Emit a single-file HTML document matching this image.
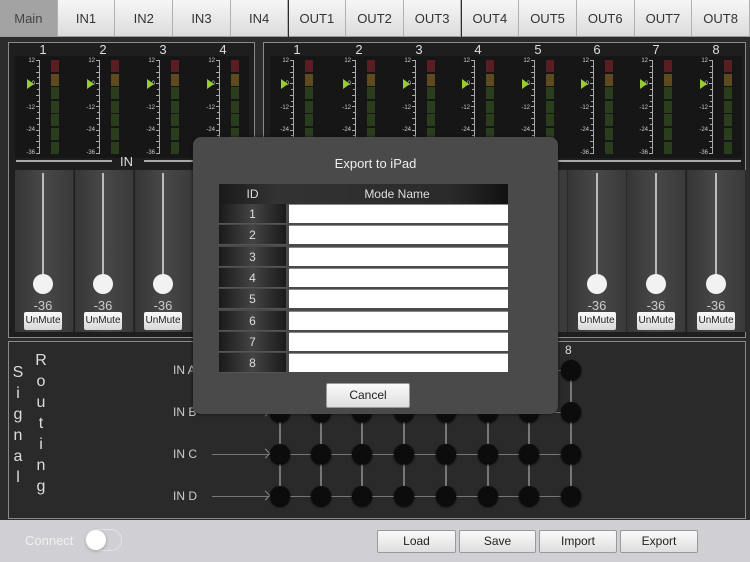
<!DOCTYPE html>
<html><head><meta charset="utf-8">
<style>
*{margin:0;padding:0;box-sizing:border-box}
body{width:750px;height:562px;overflow:hidden;background:#2c2c2c;font-family:"Liberation Sans",sans-serif;position:relative}
.abs{position:absolute}
.tab{position:absolute;top:0;height:37px;background:linear-gradient(#f6f6f6,#dcdcdc);border-right:1px solid #b0b0b0;border-bottom:1px solid #999;color:#333;font-size:13px;text-align:center;line-height:37px}
.tab.sel{background:#a3a3a3;color:#444}
.panel{position:absolute;border:2px solid #8a8a8a;background:#1e1e1e}
.num{position:absolute;color:#ddd;font-size:13px;width:20px;text-align:center}
.btn{position:absolute;background:linear-gradient(#fafafa,#dedede);border:1px solid #999;border-radius:2px;font-size:12px;color:#222;text-align:center}
.fcol{position:absolute;background:linear-gradient(90deg,#363636,#484848 50%,#3a3a3a);border-right:1px solid #2a2a2a}
.vline{position:absolute;width:2px;background:#bbb}
.knob{position:absolute;width:20px;height:20px;border-radius:50%;background:#f2f2f2}
.db{position:absolute;color:#ccc;font-size:13px;width:40px;text-align:center}
.um{position:absolute;width:38px;height:18px;background:linear-gradient(#fafafa,#d8d8d8);font-size:10px;line-height:18px;text-align:center;color:#222;border-radius:2px}
.dot{position:absolute;width:20px;height:20px;border-radius:50%;background:#0c0c0c;box-shadow:0 1px 2px #000}
.lbl{position:absolute;color:#ccc;font-size:12px}
.row{position:absolute;left:219px;width:289px;height:21px}
.rid{position:absolute;left:0;width:67px;height:20px;background:linear-gradient(90deg,#1a1a1a,#444 50%,#1a1a1a);color:#ddd;font-size:12px;text-align:center;line-height:20px;border-bottom:1px solid #555}
.rin{position:absolute;left:70px;width:219px;height:19px;background:#fff;border-top:1px solid #888}
</style></head><body>
<div id="tabs"></div>

<div class="panel" style="left:8px;top:42px;width:247px;height:296px;border-width:1px"></div>
<div class="panel" style="left:263px;top:42px;width:483px;height:296px;border-width:1px"></div>
<div id="meters"></div>
<div class="abs" style="left:16px;top:160px;width:96px;height:2px;background:#aaa"></div>
<div class="abs" style="left:120px;top:154px;color:#ddd;font-size:13px">IN</div>
<div class="abs" style="left:144px;top:160px;width:50px;height:2px;background:#aaa"></div>
<div class="abs" style="left:271px;top:160px;width:470px;height:2px;background:#aaa"></div>
<div id="faders"></div>

<div class="panel" style="left:8px;top:341px;width:738px;height:178px;background:#2a2a2a;border-width:1px"></div>
<div class="abs" style="left:11px;top:362px;color:#ddd;font-size:16px;line-height:21px;width:14px;text-align:center">S<br>i<br>g<br>n<br>a<br>l</div>
<div class="abs" style="left:34px;top:350px;color:#ddd;font-size:16px;line-height:21px;width:14px;text-align:center">R<br>o<br>u<br>t<br>i<br>n<br>g</div>
<div id="route"></div>
<div class="abs" style="left:565px;top:343px;color:#ddd;font-size:12px">8</div>

<div class="abs" style="left:0;top:520px;width:750px;height:42px;background:#d0d0d4"></div>
<div class="abs" style="left:25px;top:533px;color:#f0f0f2;font-size:13px">Connect</div>
<div class="abs" style="left:85px;top:529px;width:37px;height:22px;border-radius:11px;border:1px solid #e4e4e6;background:#d0d0d4"></div>
<div class="abs" style="left:86px;top:530px;width:20px;height:20px;border-radius:50%;background:#fff;box-shadow:0 1px 3px rgba(0,0,0,.3)"></div>
<div class="btn" style="left:377px;top:530px;width:79px;height:23px;line-height:21px">Load</div>
<div class="btn" style="left:459px;top:530px;width:77px;height:23px;line-height:21px">Save</div>
<div class="btn" style="left:539px;top:530px;width:78px;height:23px;line-height:21px">Import</div>
<div class="btn" style="left:620px;top:530px;width:78px;height:23px;line-height:21px">Export</div>

<div class="abs" style="left:193px;top:137px;width:365px;height:277px;background:#4a4a4a;border-radius:8px;box-shadow:0 0 3px #111"></div>
<div class="abs" style="left:193px;top:156px;width:365px;text-align:center;color:#eee;font-size:13px">Export to iPad</div>
<div class="abs" style="left:219px;top:184px;width:289px;height:20px;background:linear-gradient(90deg,#1a1a1a,#333 20%,#2a2a2a 80%,#111)"></div>
<div class="abs" style="left:219px;top:187px;width:67px;text-align:center;color:#ddd;font-size:12px">ID</div>
<div class="abs" style="left:286px;top:187px;width:222px;text-align:center;color:#ddd;font-size:12px">Mode Name</div>
<div id="rows"></div>
<div class="btn" style="left:326px;top:383px;width:84px;height:25px;line-height:23px;font-size:12px">Cancel</div>

<script>
var h='';
var names=['Main','IN1','IN2','IN3','IN4','OUT1','OUT2','OUT3','OUT4','OUT5','OUT6','OUT7','OUT8'];
var w=750/13;
names.forEach(function(n,i){h+='<div class="tab'+(i==0?' sel':'')+'" style="left:'+(i*w).toFixed(1)+'px;width:'+(w).toFixed(1)+'px">'+n+'</div>';});
document.getElementById('tabs').innerHTML=h;
var ins=[43,103,163,223],outs=[297,359,419,478,538,597,656,716];
h='';
h+='<div class="abs" style="left:15px;top:56px;width:234px;height:102px;background:#161616"></div>';
h+='<div class="abs" style="left:270px;top:56px;width:472px;height:102px;background:#161616"></div>';
function meter(cx,n){
 var s='<div class="num" style="left:'+(cx-10)+'px;top:42px">'+n+'</div>';
 s+='<div class="abs" style="left:'+(cx-4)+'px;top:60px;width:1px;height:93px;background:#aaa"></div>';
 for(var k=0;k<=16;k++){var y=60+k*5.8;s+='<div class="abs" style="left:'+(cx-7+(k%2?1:0))+'px;top:'+y.toFixed(1)+'px;width:'+(k%2?3:4)+'px;height:1px;background:#aaa"></div>';}
 var lab=[['12',58],['0',81],['-12',105],['-24',127],['-36',150]];
 lab.forEach(function(l){s+='<div class="abs" style="left:'+(cx-24)+'px;top:'+l[1]+'px;width:16px;text-align:right;color:#ccc;font-size:6px">'+l[0]+'</div>';});
 var cols=['#5a1e22','#5e4a1e','#2a3e1e','#2a3e1e','#2a3e1e','#2a3e1e','#2a3e1e'];
 cols.forEach(function(c,j){s+='<div class="abs" style="left:'+(cx+8)+'px;top:'+(60+j*13.6).toFixed(1)+'px;width:8px;height:12px;background:'+c+'"></div>';});
 s+='<div class="abs" style="left:'+(cx-16)+'px;top:79px;width:0;height:0;border-left:7px solid #9c3;border-top:5px solid transparent;border-bottom:5px solid transparent"></div>';
 return s;}
ins.forEach(function(c,i){h+=meter(c,i+1);});
outs.forEach(function(c,i){h+=meter(c,i+1);});
document.getElementById('meters').innerHTML=h;
h='';
function fader(cx,x0,wd){
 var s='<div class="fcol" style="left:'+x0+'px;top:170px;width:'+wd+'px;height:162px"></div>';
 s+='<div class="vline" style="left:'+(cx-1)+'px;top:173px;height:105px"></div>';
 s+='<div class="knob" style="left:'+(cx-10)+'px;top:274px"></div>';
 s+='<div class="db" style="left:'+(cx-20)+'px;top:298px">-36</div>';
 s+='<div class="um" style="left:'+(cx-19)+'px;top:312px">UnMute</div>';
 return s;}
ins.forEach(function(c){h+=fader(c,c-28,59);});
outs.forEach(function(c){h+=fader(c,c-29,59);});
document.getElementById('faders').innerHTML=h;
h='';
var gx=[280,321,362,404,446,488,529,571],gy=[370,412,454,496],ln=['IN A','IN B','IN C','IN D'];
gx.forEach(function(x){h+='<div class="abs" style="left:'+(x-1)+'px;top:370px;width:2px;height:126px;background:#777"></div>';});
gy.forEach(function(y,i){
 h+='<div class="lbl" style="left:173px;top:'+(y-7)+'px">'+ln[i]+'</div>';
 h+='<div class="abs" style="left:212px;top:'+y+'px;width:359px;height:1px;background:#777"></div>';
 h+='<div class="abs" style="left:262px;top:'+(y-4)+'px;width:7px;height:7px;border-top:1px solid #888;border-right:1px solid #888;transform:rotate(45deg)"></div>';
 gx.forEach(function(x){h+='<div class="dot" style="left:'+(x-10)+'px;top:'+(y-10)+'px"></div>';});
});
document.getElementById('route').innerHTML=h;
h='';
for(var r=0;r<8;r++){var y=204+r*21.3;h+='<div class="row" style="top:'+y.toFixed(1)+'px"><div class="rid">'+(r+1)+'</div><div class="rin"></div></div>';}
document.getElementById('rows').innerHTML=h;
</script>
</body></html>
